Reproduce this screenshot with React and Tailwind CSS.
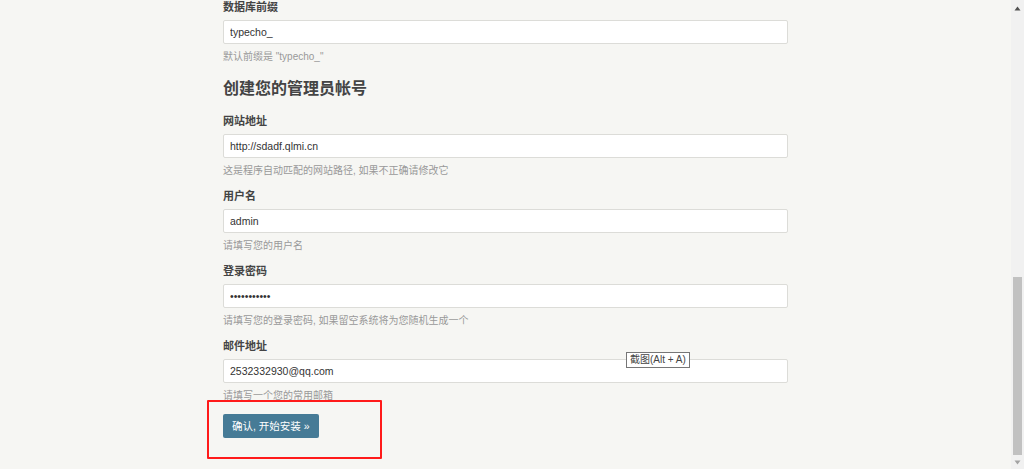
import React from "react";

const font = "font-['Liberation_Sans','Noto_Sans_CJK_SC',sans-serif]";

const Field = ({ label, value, desc, className = "", children }) => (
  <div className={className}>
    <div className="h-4 leading-[18px] text-[11px] font-bold text-[#444]">{label}</div>
    <div className="relative mt-[6px]">
      <input
        readOnly
        value={value}
        className="block w-full h-6 px-[6px] bg-white border border-[#dcdcd8] rounded-[2px] text-[10.5px] text-[#333] outline-none"
      />
      {children}
    </div>
    <div className="mt-1 h-4 leading-[17px] text-[10px] text-[#999]">{desc}</div>
  </div>
);

export default function App() {
  return (
    <div className={`flex h-[469px] w-full overflow-hidden bg-[#f6f6f3] ${font}`}>
      {/* Main column */}
      <div className="flex-1">
        <div className="w-[565px] mx-auto -mt-[2px]">
          <Field label="数据库前缀" value="typecho_" desc={'默认前缀是 "typecho_"'} />

          <h3 className="mt-[13px] h-6 leading-6 text-[16px] font-bold text-[#444]">
            创建您的管理员帐号
          </h3>

          <Field
            className="mt-[11px]"
            label="网站地址"
            value="http://sdadf.qlmi.cn"
            desc="这是程序自动匹配的网站路径, 如果不正确请修改它"
          />
          <Field className="mt-[9px]" label="用户名" value="admin" desc="请填写您的用户名" />
          <Field
            className="mt-[9px]"
            label="登录密码"
            value="•••••••••••"
            desc="请填写您的登录密码, 如果留空系统将为您随机生成一个"
          />
          <Field
            className="mt-[9px]"
            label="邮件地址"
            value="2532332930@qq.com"
            desc="请填写一个您的常用邮箱"
          >
            {/* Screenshot tool tooltip */}
            <div className="absolute left-[403px] -top-[7px] h-4 px-[3px] leading-[14px] bg-white border border-[#767676] text-[10px] text-[#444] whitespace-nowrap">
              截图(Alt + A)
            </div>
          </Field>

          <div className="relative mt-[10px]">
            <button className="h-6 px-[9px] bg-[#467b96] rounded-[2px] text-[10.5px] text-white leading-6">
              确认, 开始安装 »
            </button>
            {/* Red highlight box */}
            <div className="absolute -left-4 -top-[13px] w-[175px] h-[59px] border-2 border-[#ff1a1a] rounded-[1px]" />
          </div>
        </div>
      </div>

      {/* Scrollbar */}
      <div className="w-[13px] h-full flex flex-col bg-[#f1f1f1]">
        <div className="h-[17px] flex items-center justify-center">
          <svg width="7" height="5" viewBox="0 0 7 5">
            <path d="M3.5 0.5 L6.5 4.5 L0.5 4.5 Z" fill="#505050" />
          </svg>
        </div>
        <div className="flex-1" />
        <div className="h-[178px] mx-[2px] bg-[#c1c1c1]" />
        <div className="h-[14px] flex items-center justify-center">
          <svg width="7" height="5" viewBox="0 0 7 5">
            <path d="M0.5 0.5 L6.5 0.5 L3.5 4.5 Z" fill="#a3a3a3" />
          </svg>
        </div>
      </div>
    </div>
  );
}
